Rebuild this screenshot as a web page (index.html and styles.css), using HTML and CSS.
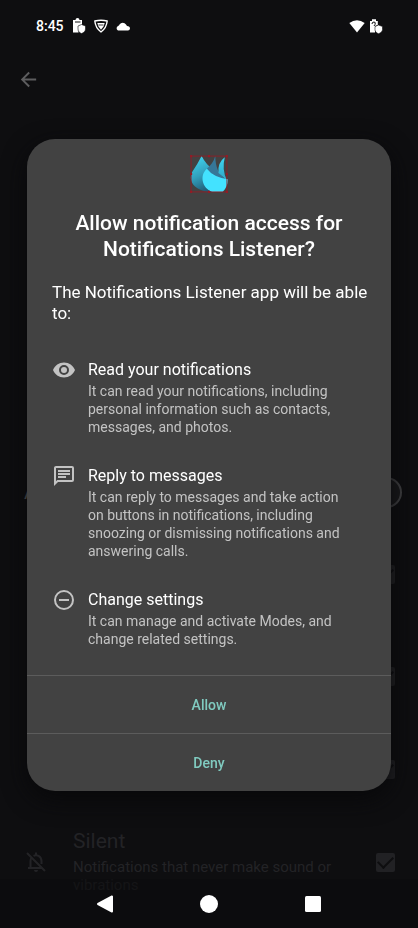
FILE: index.html
```html
<!DOCTYPE html>
<html lang="en">
<head>
<meta charset="utf-8">
<meta name="viewport" content="width=device-width, initial-scale=1">
<title>Notification access</title>
<link rel="stylesheet" href="styles.css">
</head>
<body>
<div class="screen">
  <header class="status">
    <div class="status-group">
      <time class="clock">8:45</time>
      <svg class="status-icon" viewBox="0 0 14 16" aria-hidden="true"><path fill="#fff" d="M1 2h2.500a2 2 0 0 1 4 0H10v5L6.500 8v6.500H1zM3 4.600h5.500V3.400H3z"/><path fill="#fff" d="M9.500 6.500 13.500 8v3c0 2-1.700 3.800-4 4.500C7.200 14.800 6 13 6 11V8z" stroke="#0e0e10" stroke-width=".6"/></svg>
      <svg class="status-icon" viewBox="0 0 14 16" aria-hidden="true"><path fill="none" stroke="#fff" stroke-width="1.400" stroke-linejoin="round" d="M.8 3Q7 1.600 13.200 3 12.500 10 7 14 1.500 10 .8 3z"/><path fill="#fff" d="M3.300 5h7.400L9.500 8.500 7 11.800 4.500 8.500z"/><path stroke="#0e0e10" stroke-width=".8" d="M4.500 7h5"/></svg>
      <svg class="status-icon" viewBox="0 0 14 16" aria-hidden="true"><path fill="#fff" d="M2 12.500a2.500 2.500 0 0 1 0-4.500Q3 7.500 3.500 6.500A4 4 0 0 1 10 6.500L11 8q3 .3 3 2.500a2.300 2.300 0 0 1-2 2z"/></svg>
    </div>
    <div class="status-group status-right">
      <svg class="status-icon wifi" viewBox="0 0 16 16" aria-hidden="true"><path fill="#fff" d="M.3 5Q8-.5 15.700 5L8 14.500z"/></svg>
      <svg class="status-icon" viewBox="0 0 14 16" aria-hidden="true"><path fill="#fff" d="M1 3h2V1.200h4V3h1.800v4L6 8v6.500H1z"/><path fill="none" stroke="#0e0e10" d="M3 6q0-2 2-2t1 2.500L5 8"/><path fill="#fff" d="M9.500 7 13.500 8.500v3c0 2-1.700 3.500-4 4.200-2.300-.7-3.500-2.200-3.500-4.200v-3z" stroke="#0e0e10" stroke-width=".6"/></svg>
    </div>
  </header>

  <main class="settings">
    <button class="back" aria-label="Back"><svg viewBox="0 0 24 24"><path fill="currentColor" d="M20 11H7.830l5.590-5.590L12 4l-8 8 8 8 1.410-1.410L7.830 13H20z"/></svg></button>
    <label class="access-row"><span>Allow</span><input class="switch" type="checkbox"></label>
    <label class="row"><input class="check" type="checkbox" checked aria-label="Real-time"></label>
    <label class="row"><input class="check" type="checkbox" checked aria-label="Conversations"></label>
    <label class="row row-short"><input class="check" type="checkbox" checked aria-label="Notifications"></label>
    <label class="row">
      <svg class="bell" viewBox="0 0 24 24" aria-hidden="true"><g fill="none" stroke="currentColor" stroke-width="2"><path d="M3 3l18 18M4 18h14M6.500 18v-7q0-2 1-3.500M9.500 5.800Q12 4.500 14.500 5.800 17.500 7.500 17.500 11v3M12 5V2.500"/></g><path fill="currentColor" d="M10 20h4a2 2 0 0 1-4 0z"/></svg>
      <span class="row-text"><span class="row-title">Silent</span><span class="row-desc">Notifications that never make sound or vibrations</span></span>
      <input class="check" type="checkbox" checked>
    </label>
  </main>
</div>

<div class="overlay">
  <section class="dialog" role="dialog" aria-modal="true" aria-labelledby="title">
    <div class="content">
      <svg class="logo" viewBox="0 0 38 38" aria-hidden="true">
        <defs>
          <linearGradient id="drop" x1=".3" y1="0" x2=".65" y2="1"><stop offset="0" stop-color="#3fd3ee"/><stop offset=".5" stop-color="#329fbc"/><stop offset="1" stop-color="#20546e"/></linearGradient>
          <linearGradient id="tip" x1="0" y1="0" x2="0" y2="1"><stop offset="0" stop-color="#3dd5f2"/><stop offset="1" stop-color="#2fa6c4"/></linearGradient>
        </defs>
        <path fill="url(#drop)" d="M12 2Q8 10 3 17C-1 25 4 34 18 36h8L24 16Q16 10 12 2z"/>
        <path fill="#367798" d="M25 2Q23 9 17 14l5 12 13-2Q25 18 25 2z"/>
        <path fill="url(#tip)" d="M34 3Q27 8 28 18l8 7Q31 15 34 3z"/>
        <path fill="#43e2ff" d="M17 14C10 20 12 32 22 36h10Q37 31 37 24 23 22 17 14z"/>
        <path fill="none" stroke="#941b25" stroke-width=".8" d="M2 2h34v34H2z"/>
        <path fill="#941b25" d="M1 1h2v2H1zM18 1h2v2h-2zM35 1h2v2h-2zM1 18h2v2H1zM35 18h2v2h-2zM1 35h2v2H1zM18 35h2v2h-2zM35 35h2v2h-2z"/>
      </svg>
      <h1 id="title">Allow notification access for Notifications Listener?</h1>
      <p class="intro">The Notifications Listener app will be able to:</p>
      <ul class="items">
        <li>
          <svg viewBox="0 0 24 24" aria-hidden="true"><path fill="currentColor" d="M12 4.500C7 4.500 2.730 7.610 1 12c1.730 4.390 6 7.500 11 7.500s9.270-3.110 11-7.500c-1.730-4.390-6-7.500-11-7.500zM12 17a5 5 0 1 1 0-10 5 5 0 0 1 0 10zm0-8a3 3 0 1 0 0 6 3 3 0 0 0 0-6z"/></svg>
          <div><h2>Read your notifications</h2><p>It can read your notifications, including personal information such as contacts, messages, and photos.</p></div>
        </li>
        <li>
          <svg viewBox="0 0 24 24" aria-hidden="true"><path fill="currentColor" d="M4 2h16a2 2 0 0 1 2 2v12a2 2 0 0 1-2 2H6l-4 4V4c0-1.100.9-2 2-2zm0 2v13.200L5.200 16H20V4zm2 8h8v2H6zm0-3h12v2H6zm0-3h12v2H6z"/></svg>
          <div><h2>Reply to messages</h2><p>It can reply to messages and take action on buttons in notifications, including snoozing or dismissing notifications and answering calls.</p></div>
        </li>
        <li>
          <svg viewBox="0 0 24 24" aria-hidden="true"><path fill="currentColor" d="M7 11v2h10v-2zm5-9a10 10 0 1 0 0 20 10 10 0 0 0 0-20zm0 18a8 8 0 1 1 0-16 8 8 0 0 1 0 16z"/></svg>
          <div><h2>Change settings</h2><p>It can manage and activate Modes, and change related settings.</p></div>
        </li>
      </ul>
    </div>
    <button class="action">Allow</button>
    <button class="action">Deny</button>
  </section>
</div>

<nav class="nav" aria-label="System">
  <button aria-label="Back"><svg viewBox="0 0 20 20"><path fill="#fff" stroke="#fff" stroke-width="2" stroke-linejoin="round" d="M3 10 17 2.500v15z"/></svg></button>
  <button aria-label="Home"><svg viewBox="0 0 20 20"><circle cx="10" cy="10" r="9" fill="#fff"/></svg></button>
  <button aria-label="Overview"><svg viewBox="0 0 20 20"><rect x="2" y="2" width="16" height="16" rx="1.500" fill="#fff"/></svg></button>
</nav>
</body>
</html>
```
FILE: styles.css
```css
* { box-sizing: border-box; }
body {
  margin: 0;
  background: #0e0e10;
  color: #fff;
  font-family: Roboto, "Open Sans", sans-serif;
}
h1, h2, p, ul { margin: 0; padding: 0; }
button { border: 0; padding: 0; background: none; color: inherit; font: inherit; }
svg { display: block; flex: none; }

.screen { height: 100vh; overflow: hidden; }

.status {
  display: flex;
  align-items: center;
  justify-content: space-between;
  height: 52px;
  padding: 0 35px 0 36px;
}
.status-group { display: flex; align-items: center; gap: 8px; }
.status-right { gap: 4px; }
.clock { font-size: 14px; font-weight: 500; }
.status-icon { width: 14px; height: 16px; }
.wifi { width: 16px; }

.settings { color: #232326; }
.back { display: block; margin: 16px 0 0 17px; color: #5d5d5f; }
.back svg { width: 23px; height: 23px; }
.access-row {
  display: flex;
  align-items: center;
  justify-content: space-between;
  height: 62px;
  margin-top: 370px;
  padding: 0 16px 0 24px;
  color: #5d5d5f;
  font-size: 20px;
}
.switch {
  appearance: none;
  width: 52px;
  height: 31px;
  margin: 0;
  border: 2px solid #414143;
  border-radius: 16px;
  background: #19191b;
}
.row {
  display: flex;
  align-items: center;
  justify-content: flex-end;
  height: 102px;
  padding: 0 23px 0 24px;
}
.row-short { height: 84px; }
.check {
  appearance: none;
  display: grid;
  place-items: center;
  flex: none;
  width: 19px;
  height: 19px;
  margin: 0;
  border-radius: 2px;
  background: #212124;
}
.check::before {
  content: "";
  width: 13px;
  height: 7px;
  margin-top: -4px;
  border: solid #0e0e10;
  border-width: 0 0 2px 2px;
  transform: rotate(-45deg);
}
.bell { width: 24px; height: 24px; }
.row-text { flex: 1; margin: 0 40px 0 25px; padding-bottom: 2px; }
.row-title, .row-desc { display: block; }
.row-title { font-size: 21px; line-height: 26px; }
.row-desc { font-size: 15px; line-height: 18px; margin-top: 4px; }

.overlay {
  position: fixed;
  inset: 0;
  display: grid;
  align-items: center;
  padding: 2px 27px 0;
}
.dialog {
  overflow: hidden;
  border-radius: 28px;
  background: #424242;
  box-shadow: 0 8px 24px #08080a;
}
.content { padding: 15px 0 27px; }
.logo { width: 40px; height: 40px; margin: 0 auto; }
h1 {
  margin-top: 16px;
  padding: 0 25px;
  text-align: center;
  font-size: 21px;
  font-weight: 500;
  line-height: 26px;
}
.intro {
  margin-top: 20px;
  padding: 0 20px 0 25px;
  font-size: 17px;
  line-height: 21px;
}
.items {
  display: grid;
  gap: 28px;
  margin-top: 34px;
  padding: 0 35px 0 25px;
  list-style: none;
  color: #c3c3c3;
}
.items li { display: flex; gap: 12px; }
.items svg { width: 24px; height: 24px; }
h2 { color: #fff; font-size: 16px; font-weight: 400; line-height: 24px; }
.items p { font-size: 14px; line-height: 18px; }
.action {
  display: block;
  width: 100%;
  height: 58px;
  border-top: 1px solid #5c5c5c;
  color: #80cbc0;
  font-size: 14px;
  font-weight: 500;
}

.nav {
  position: fixed;
  inset: auto 0 0;
  display: flex;
  justify-content: center;
  gap: 84px;
  height: 49px;
  background: #0c0c0e99;
}
.nav svg { width: 20px; height: 20px; }
```
